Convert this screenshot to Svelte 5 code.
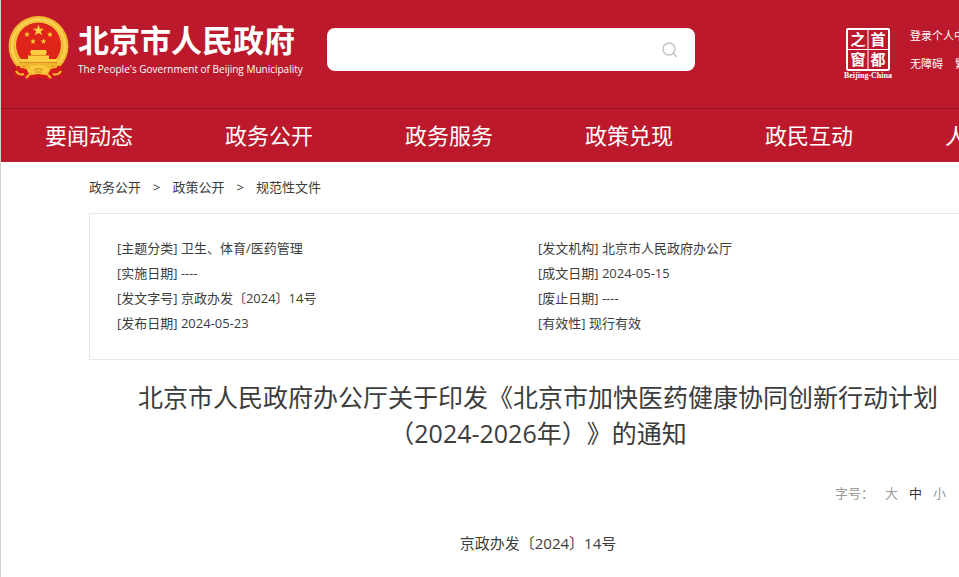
<script lang="ts">
	const navItems = ['要闻动态', '政务公开', '政务服务', '政策兑现', '政民互动', '人文北京'];

	const crumbs = ['政务公开', '政策公开', '规范性文件'];

	const details = [
		['主题分类', '卫生、体育/医药管理'],
		['发文机构', '北京市人民政府办公厅'],
		['实施日期', '----'],
		['成文日期', '2024-05-15'],
		['发文字号', '京政办发〔2024〕14号'],
		['废止日期', '----'],
		['发布日期', '2024-05-23'],
		['有效性', '现行有效']
	];

	const sizes = ['大', '中', '小'];
	let activeSize = $state('中');
	let keyword = $state('');
</script>

{#snippet star(x: number, y: number, scale: number)}
	<path
		transform="translate({x} {y}) scale({scale})"
		fill="#fbd23c"
		d="M0-10 2.4-3.1 9.5-3.1 3.8 1.2 5.9 8.1 0 4-5.9 8.1-3.8 1.2-9.5-3.1-2.4-3.1z"
	/>
{/snippet}

<div class="page">
	<header>
		<div class="top">
			<a class="brand" href="/">
				<svg class="emblem" width="61" height="65" viewBox="0 0 61 65" aria-hidden="true">
					<path d="M8 47 6 61l8-2 5 5 7-4h9l7 4 5-5 8 2-2-14z" fill="#d8191c" />
					<circle cx="30.500" cy="30" r="30" fill="#efb52b" />
					<circle cx="30.500" cy="30" r="26.500" fill="none" stroke="#f8cf50" stroke-width="3" />
					<circle cx="30.500" cy="29" r="23" fill="#df2519" stroke="#f9d44c" stroke-width="1" />
					{@render star(30.5, 14.5, 0.6)}
					{@render star(19, 18.5, 0.3)}
					{@render star(42, 18.5, 0.3)}
					{@render star(25, 25.5, 0.3)}
					{@render star(35.5, 25.5, 0.3)}
					<path d="M23 34h15l1 3H22zM23 37h15v2H23zM20 39h21v4H20zM11 43h39l-2 4H13z" fill="#fbcf3f" />
					<path d="M20 39.500h21" stroke="#e58a20" stroke-width="1" />
					<path d="M12 47h37" stroke="#c9401a" stroke-width="1" />
					<path d="M9 47h43l-5 5H14z" fill="#efb52b" />
					<path d="M9 50q-1 7 5 10l7-2-4-8zM52 50q1 7-5 10l-7-2 4-8z" fill="#d8191c" />
					<path
						d="M12 51q8 0 12 5l-6 6M49 51q-8 0-12 5l6 6M8 55q3 5 8 3M53 55q-3 5-8 3"
						fill="none"
						stroke="#f4b92f"
						stroke-width="2"
					/>
					<path d="m23 50 7-1 8 1 3 4-6 4h-9l-6-4z" fill="#f8c93b" />
					<path d="M26 54q4-3 9 0M27 56h7" fill="none" stroke="#d17a18" stroke-width="1" />
					<path d="m24 59 6-1 7 1 1 4-8-2-7 2z" fill="#d8191c" />
				</svg>
				<span class="brand-text">
					<span class="brand-name">北京市人民政府</span>
					<span class="brand-en">The People's Government of Beijing Municipality</span>
				</span>
			</a>

			<form class="search" role="search" onsubmit={(e) => e.preventDefault()}>
				<input type="text" aria-label="搜索" bind:value={keyword} />
				<button type="submit" aria-label="搜索">
					<svg width="16" height="16" viewBox="0 0 16 16" fill="none" stroke="#c4c4c4" stroke-width="1.500">
						<circle cx="7" cy="7" r="6" />
						<path d="m11.500 11.500 3 3" stroke-linecap="round" />
					</svg>
				</button>
			</form>

			<div class="tools">
				<a class="seal" href="/" aria-label="首都之窗">
					<svg width="50" height="52" viewBox="0 0 50 52">
						<rect x="4" y="1" width="42" height="41" rx="1" fill="none" stroke="#fff" stroke-width="2" />
						<path d="M25 2v39M5 21.500h40" stroke="#fff" stroke-width="1" />
						<g class="seal-chars">
							<text x="15" y="17">之</text>
							<text x="35" y="17">首</text>
							<text x="15" y="37">窗</text>
							<text x="35" y="37">都</text>
						</g>
						<text class="seal-en" x="25" y="50">Beijing-China</text>
					</svg>
				</a>
				<div class="links">
					<a href="/login">登录个人中心</a>
					<div class="links-row">
						<a href="/accessible">无障碍</a>
						<a href="/tc">繁體</a>
					</div>
				</div>
			</div>
		</div>

		<nav>
			{#each navItems as item}
				<a href="/">{item}</a>
			{/each}
		</nav>
	</header>

	<main>
		<div class="crumbs">
			{#each crumbs as crumb, i}
				{#if i > 0}<span>&gt;</span>{/if}
				<a href="/">{crumb}</a>
			{/each}
		</div>

		<ul class="details">
			{#each details as [label, value]}
				<li>[{label}] {value}</li>
			{/each}
		</ul>

		<h1>北京市人民政府办公厅关于印发《北京市加快医药健康协同创新行动计划<br />（2024-2026年）》的通知</h1>

		<div class="sizes">
			<span>字号：</span>
			{#each sizes as size}
				<button type="button" class:active={activeSize === size} onclick={() => (activeSize = size)}>
					{size}
				</button>
			{/each}
		</div>

		<p class="doc-number">京政办发〔2024〕14号</p>
	</main>
</div>

<style>
	:global(body) {
		background: #fff;
	}

	.page {
		min-height: 100vh;
		box-sizing: border-box;
		overflow: hidden;
		border-left: 1px solid #d0d0d0;
		font-family: 'Open Sans', 'Noto Sans CJK SC', sans-serif;
		font-size: 13px;
		color: #3c3c3c;
		text-spacing-trim: space-all;
	}

	a {
		color: inherit;
		text-decoration: none;
		white-space: nowrap;
	}

	button {
		padding: 0;
		border: none;
		background: transparent;
		font: inherit;
		color: inherit;
		cursor: pointer;
	}

	header {
		margin-left: -1px;
		background: #bc1a2c;
		border-left: 1px solid #a01525;
		color: #fff;
	}

	.top {
		display: flex;
		align-items: flex-start;
		height: 108px;
		box-sizing: border-box;
		padding: 16px 0 0 7px;
	}

	.brand {
		display: flex;
		flex: none;
		gap: 9px;
		width: 319px;
	}

	.brand-text {
		display: flex;
		flex-direction: column;
		padding-top: 4px;
	}

	.brand-name {
		font-size: 31px;
		font-weight: 700;
		line-height: 40px;
	}

	.brand-en {
		font-size: 10px;
		line-height: 18px;
	}

	.search {
		display: flex;
		flex: none;
		align-items: center;
		width: 368px;
		height: 43px;
		margin-top: 12px;
		border-radius: 8px;
		background: #fff;
	}

	.search input {
		flex: 1;
		min-width: 0;
		height: 100%;
		box-sizing: border-box;
		padding: 0 16px;
		border: none;
		outline: none;
		background: transparent;
		font: inherit;
	}

	.search button {
		display: flex;
		padding: 0 17px;
	}

	.tools {
		display: flex;
		flex: 1;
		justify-content: flex-end;
		gap: 17px;
		margin-right: -29px;
		padding-top: 12px;
	}

	.seal {
		flex: none;
	}

	.seal svg {
		display: block;
		fill: #fff;
	}

	.seal-chars {
		font-size: 15px;
		font-weight: 700;
		text-anchor: middle;
	}

	.seal-en {
		font-family: 'Liberation Serif', serif;
		font-size: 8px;
		font-weight: 700;
		text-anchor: middle;
	}

	.links {
		flex: none;
		width: 78px;
		font-size: 11px;
		line-height: 16px;
	}

	.links-row {
		display: flex;
		gap: 12px;
		margin-top: 12px;
	}

	nav {
		display: flex;
		gap: 92px;
		padding-left: 44px;
		border-top: 1px solid #981423;
		font-size: 22px;
		line-height: 53px;
	}

	main {
		margin: 0 -28px 0 88px;
	}

	.crumbs {
		display: flex;
		gap: 12px;
		padding-top: 15px;
		line-height: 20px;
	}

	.details {
		display: grid;
		grid-template-columns: 1fr 1fr;
		margin: 16px 0 19px;
		padding: 22px 27px 23px;
		border: 1px solid #e9e9e4;
		line-height: 25px;
		list-style: none;
	}

	h1 {
		margin: 0;
		font-size: 25px;
		font-weight: 400;
		line-height: 36px;
		text-align: center;
		white-space: nowrap;
	}

	.sizes {
		display: flex;
		justify-content: flex-end;
		gap: 11px;
		margin: 32px 41px 0 0;
		line-height: 20px;
		color: #999;
	}

	.sizes .active {
		color: #333;
	}

	.doc-number {
		margin: 28px 0 0;
		font-size: 15px;
		line-height: 24px;
		text-align: center;
	}
</style>
